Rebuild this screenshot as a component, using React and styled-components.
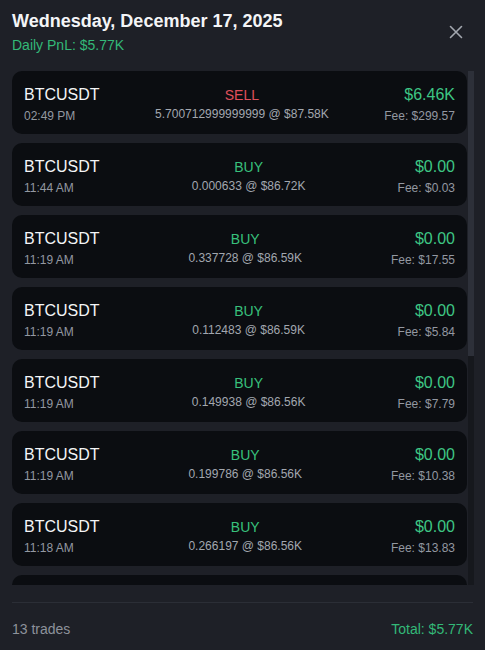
import React from 'react'
import styled, { createGlobalStyle } from 'styled-components'

const GlobalStyle = createGlobalStyle`
  html, body {
    margin: 0;
    padding: 0;
    background: #1e2027;
  }
  body {
    font-family: "Liberation Sans", Arial, sans-serif;
  }
`

const Panel = styled.div`
  box-sizing: border-box;
  height: 650px;
  display: flex;
  flex-direction: column;
  padding: 10px 11px 0 12px;
  background: #1e2027;
  color: #f2f3f5;
`

const Header = styled.div`
  display: flex;
  justify-content: space-between;
  align-items: flex-start;
  margin-bottom: 17px;
`

const Title = styled.h2`
  margin: 0;
  font-size: 18px;
  line-height: 22px;
  font-weight: 700;
  color: #f4f5f7;
`

const DailyPnl = styled.div`
  margin-top: 4px;
  font-size: 14px;
  line-height: 18px;
  color: #33b978;
`

const CloseButton = styled.button`
  margin: 14px 10px 0 0;
  padding: 0;
  width: 16px;
  height: 16px;
  border: 0;
  background: none;
  color: #a3a7af;
  display: flex;
  align-items: center;
  justify-content: center;
  cursor: pointer;
`

const ListArea = styled.div`
  flex: 1;
  min-height: 0;
  display: flex;
`

const List = styled.div`
  flex: 1;
  min-width: 0;
  overflow-y: hidden;
  display: flex;
  flex-direction: column;
  gap: 9px;
`

const ScrollTrack = styled.div`
  width: 6px;
  flex-shrink: 0;
  margin-left: 1px;
  background: #16181d;
`

const ScrollThumb = styled.div`
  width: 100%;
  background: #2d3039;
`

const Card = styled.div`
  flex-shrink: 0;
  display: flex;
  justify-content: space-between;
  align-items: flex-start;
  padding: 14px 12px 11px;
  border-radius: 10px;
  background: #0b0d11;
`

const Col = styled.div`
  display: flex;
  flex-direction: column;
  align-items: ${p => p.$align};
  text-align: ${p => (p.$align === 'flex-end' ? 'right' : p.$align === 'center' ? 'center' : 'left')};
`

const Symbol = styled.div`
  font-size: 16px;
  line-height: 20px;
  color: #f4f5f7;
`

const Side = styled.div`
  font-size: 14px;
  line-height: 18px;
  margin-top: 1px;
  color: ${p => (p.$side === 'SELL' ? '#e0505b' : '#38c07c')};
`

const Amount = styled.div`
  font-size: 16px;
  line-height: 20px;
  color: #3ec684;
`

const Sub = styled.div`
  font-size: 12px;
  line-height: 14px;
  margin-top: ${p => p.$mt}px;
  color: ${p => (p.$bright ? '#a2a7af' : '#9398a1')};
`

const Footer = styled.div`
  display: flex;
  justify-content: space-between;
  align-items: center;
  margin: 17px 1px 0 0;
  padding: 17px 0 12px;
  border-top: 1px solid #2b2e36;
  font-size: 14px;
  line-height: 18px;
`

const Count = styled.span`
  color: #8d929b;
`

const Total = styled.span`
  color: #33b978;
`

const trades = [
  { time: '02:49 PM', side: 'SELL', qty: '5.700712999999999', price: '$87.58K', pnl: '$6.46K', fee: '$299.57' },
  { time: '11:44 AM', side: 'BUY', qty: '0.000633', price: '$86.72K', pnl: '$0.00', fee: '$0.03' },
  { time: '11:19 AM', side: 'BUY', qty: '0.337728', price: '$86.59K', pnl: '$0.00', fee: '$17.55' },
  { time: '11:19 AM', side: 'BUY', qty: '0.112483', price: '$86.59K', pnl: '$0.00', fee: '$5.84' },
  { time: '11:19 AM', side: 'BUY', qty: '0.149938', price: '$86.56K', pnl: '$0.00', fee: '$7.79' },
  { time: '11:19 AM', side: 'BUY', qty: '0.199786', price: '$86.56K', pnl: '$0.00', fee: '$10.38' },
  { time: '11:18 AM', side: 'BUY', qty: '0.266197', price: '$86.56K', pnl: '$0.00', fee: '$13.83' },
  { time: '11:18 AM', side: 'BUY', qty: '0.412305', price: '$86.55K', pnl: '$0.00', fee: '$21.41' },
  { time: '11:17 AM', side: 'BUY', qty: '0.803114', price: '$86.54K', pnl: '$0.00', fee: '$41.70' },
  { time: '11:17 AM', side: 'BUY', qty: '1.024560', price: '$86.52K', pnl: '$0.00', fee: '$53.18' },
  { time: '11:16 AM', side: 'BUY', qty: '1.130482', price: '$86.50K', pnl: '$0.00', fee: '$58.67' },
  { time: '11:16 AM', side: 'BUY', qty: '0.921377', price: '$86.49K', pnl: '$0.00', fee: '$47.81' },
  { time: '11:15 AM', side: 'BUY', qty: '0.342669', price: '$86.47K', pnl: '$0.00', fee: '$17.78' },
]

// card 63px + 9px gap, list viewport is ~514px
const CARD_PITCH = 72
const VIEWPORT = 514
const thumbPct = Math.min(100, (VIEWPORT / (trades.length * CARD_PITCH - 9)) * 100)

const CloseIcon = () => (
  <svg width="14" height="14" viewBox="0 0 14 14" fill="none">
    <path d="M1.5 1.5 L12.5 12.5 M12.5 1.5 L1.5 12.5" stroke="currentColor" strokeWidth="1.6" strokeLinecap="round" />
  </svg>
)

const TradeCard = ({ trade }) => (
  <Card>
    <Col $align="flex-start">
      <Symbol>BTCUSDT</Symbol>
      <Sub $mt={4}>{trade.time}</Sub>
    </Col>
    <Col $align="center">
      <Side $side={trade.side}>{trade.side}</Side>
      <Sub $mt={3} $bright>
        {trade.qty} @ {trade.price}
      </Sub>
    </Col>
    <Col $align="flex-end">
      <Amount>{trade.pnl}</Amount>
      <Sub $mt={4}>Fee: {trade.fee}</Sub>
    </Col>
  </Card>
)

const App = () => (
  <Panel>
    <GlobalStyle />
    <Header>
      <div>
        <Title>Wednesday, December 17, 2025</Title>
        <DailyPnl>Daily PnL: $5.77K</DailyPnl>
      </div>
      <CloseButton aria-label="Close">
        <CloseIcon />
      </CloseButton>
    </Header>
    <ListArea>
      <List>
        {trades.map((t, i) => (
          <TradeCard key={i} trade={t} />
        ))}
      </List>
      <ScrollTrack>
        <ScrollThumb style={{ height: `${thumbPct}%` }} />
      </ScrollTrack>
    </ListArea>
    <Footer>
      <Count>13 trades</Count>
      <Total>Total: $5.77K</Total>
    </Footer>
  </Panel>
)

export default App
